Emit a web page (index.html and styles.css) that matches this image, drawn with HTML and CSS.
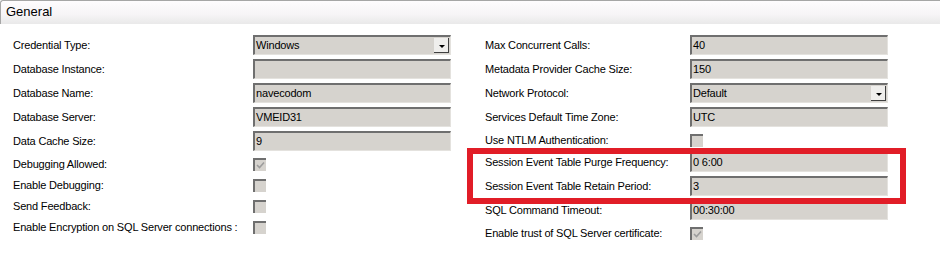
FILE: index.html
```html
<!DOCTYPE html>
<html lang="en">
<head>
    <meta charset="UTF-8">
    <title>General Settings</title>
    <link rel="stylesheet" href="styles.css">
</head>
<body>
    <div class="panel">
        <div class="panel-head">General</div>
        <div class="panel-body">
            <div class="col col-left">
                <div class="row"><span class="label">Credential Type:</span><div class="field select">Windows<span class="drop"></span></div></div>
                <div class="row"><span class="label">Database Instance:</span><div class="field"></div></div>
                <div class="row"><span class="label">Database Name:</span><div class="field">navecodom</div></div>
                <div class="row"><span class="label">Database Server:</span><div class="field">VMEID31</div></div>
                <div class="row"><span class="label">Data Cache Size:</span><div class="field">9</div></div>
                <div class="row check-row"><span class="label">Debugging Allowed:</span><span class="check checked"><svg width="9" height="9" viewBox="0 0 9 9"><path d="M1 4 L3.5 6.5 L8 1.5" fill="none" stroke="#9c9c9c" stroke-width="1.6"/></svg></span></div>
                <div class="row check-row"><span class="label">Enable Debugging:</span><span class="check"></span></div>
                <div class="row check-row"><span class="label">Send Feedback:</span><span class="check"></span></div>
                <div class="row check-row"><span class="label">Enable Encryption on SQL Server connections :</span><span class="check"></span></div>
            </div>
            <div class="col col-right">
                <div class="row"><span class="label">Max Concurrent Calls:</span><div class="field">40</div></div>
                <div class="row"><span class="label">Metadata Provider Cache Size:</span><div class="field">150</div></div>
                <div class="row"><span class="label">Network Protocol:</span><div class="field select">Default<span class="drop"></span></div></div>
                <div class="row"><span class="label">Services Default Time Zone:</span><div class="field">UTC</div></div>
                <div class="row check-row"><span class="label">Use NTLM Authentication:</span><span class="check"></span></div>
                <div class="row"><span class="label">Session Event Table Purge Frequency:</span><div class="field">0 6:00</div></div>
                <div class="row"><span class="label">Session Event Table Retain Period:</span><div class="field">3</div></div>
                <div class="row"><span class="label">SQL Command Timeout:</span><div class="field">00:30:00</div></div>
                <div class="row check-row"><span class="label">Enable trust of SQL Server certificate:</span><span class="check checked"><svg width="9" height="9" viewBox="0 0 9 9"><path d="M1 4 L3.5 6.5 L8 1.5" fill="none" stroke="#9c9c9c" stroke-width="1.6"/></svg></span></div>
            </div>
        </div>
        <div class="highlight"></div>
    </div>
</body>
</html>
```

FILE: styles.css
```css
body {
    margin: 0;
    background: #fff;
    font-family: "Liberation Sans", Arial, sans-serif;
    font-size: 11px;
    color: #000;
}
.panel {
    position: relative;
    width: 940px;
    height: 257px;
}
.panel-head {
    height: 23px;
    border-top: 1px solid #a6a6a6;
    border-left: 1px solid #a6a6a6;
    border-top-left-radius: 3px;
    background: linear-gradient(#fefcfe, #f6f4f6 60%, #e9e9e9);
    padding-left: 5px;
    font-size: 13px;
    line-height: 22px;
}
.panel-body {
    display: flex;
    padding-top: 9px;
    padding-left: 13px;
    letter-spacing: -0.18px;
}
.col-left {
    width: 472px;
}
.col-left .label {
    width: 240px;
}
.col-right .label {
    width: 205px;
}
.row {
    display: flex;
    align-items: center;
    height: 24px;
}
.check-row {
    height: 21px;
}
.label {
    white-space: nowrap;
}
.field {
    position: relative;
    box-sizing: border-box;
    width: 198px;
    height: 20px;
    background: #d6d3ce;
    border-top: 2px solid #6f6f6f;
    border-left: 2px solid #6f6f6f;
    border-right: 1px solid #e4e2de;
    border-bottom: 1px solid #e4e2de;
    padding-left: 1px;
    line-height: 17px;
}
.drop {
    position: absolute;
    right: 1px;
    top: 1px;
    width: 14px;
    height: 14px;
    background: #efeeec;
    border-right: 1px solid #404040;
    border-bottom: 1px solid #404040;
}
.drop::after {
    content: "";
    position: absolute;
    left: 5px;
    top: 7px;
    border-left: 3px solid transparent;
    border-right: 3px solid transparent;
    border-top: 3px solid #000;
}
.check {
    box-sizing: border-box;
    width: 13px;
    height: 13px;
    margin-top: 2px;
    background: #d6d3ce;
    border-top: 2px solid #6f6f6f;
    border-left: 2px solid #6f6f6f;
    display: flex;
    align-items: center;
    justify-content: center;
}
.highlight {
    position: absolute;
    left: 467px;
    top: 148px;
    width: 439px;
    height: 56px;
    box-sizing: border-box;
    border: 6px solid #e11d27;
}
```
